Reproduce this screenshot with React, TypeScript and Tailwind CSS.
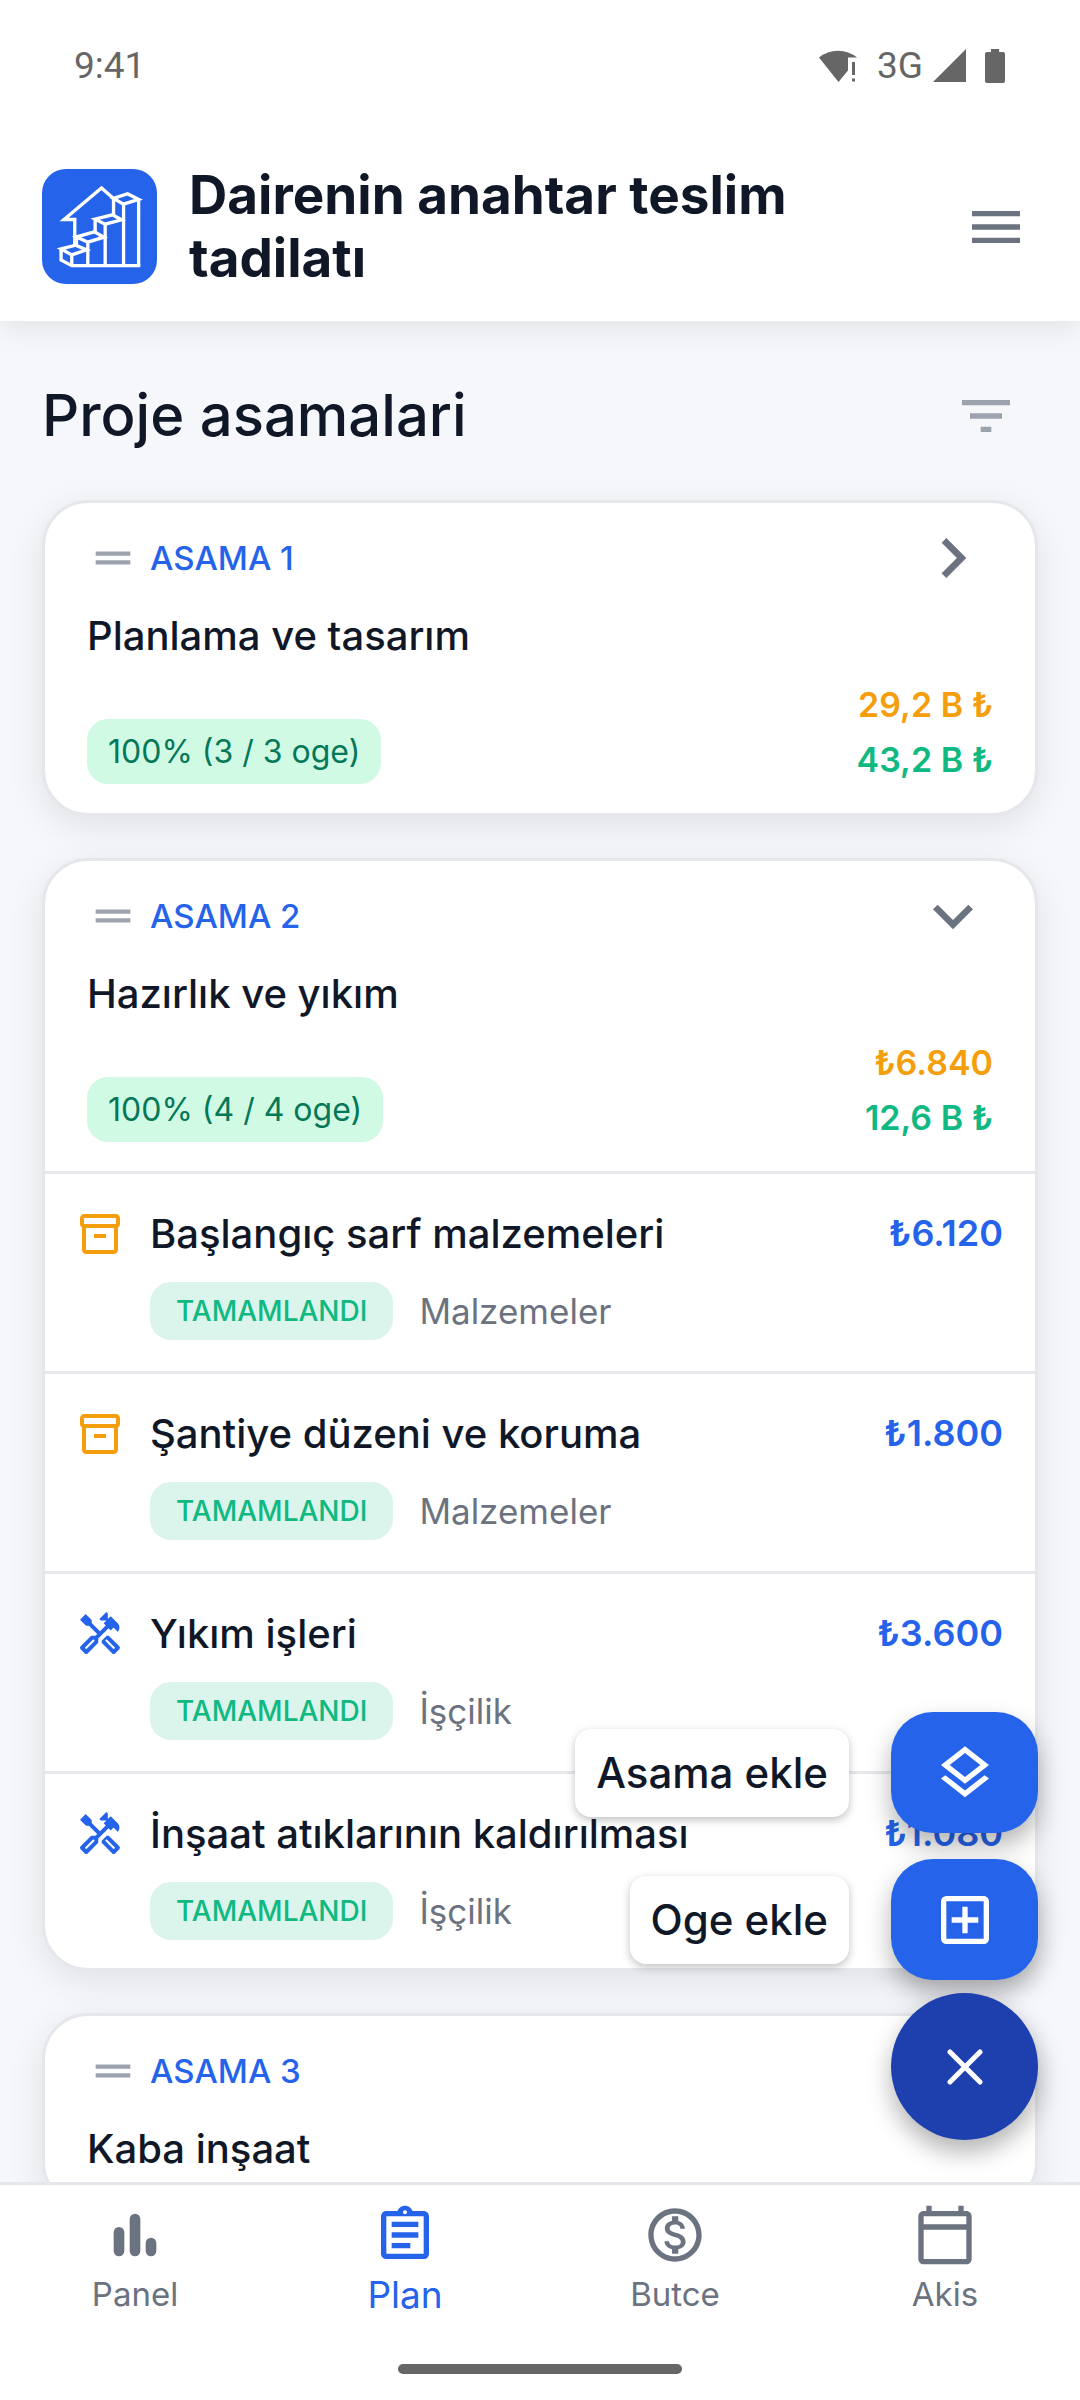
import React from 'react';
import {
  MdMenu,
  MdFilterList,
  MdDragHandle,
  MdChevronRight,
  MdExpandMore,
  MdOutlineInventory2,
  MdOutlineHandyman,
  MdOutlineLayers,
  MdOutlineAddBox,
  MdOutlineAssignment,
  MdOutlineMonetizationOn,
  MdOutlineCalendarToday,
} from 'react-icons/md';

interface Item {
  kind: 'material' | 'labor';
  title: string;
  price: string;
}

interface Stage {
  label: string;
  title: string;
  progress?: string;
  spent?: string;
  budget?: string;
  open?: boolean;
  items?: Item[];
}

const stages: Stage[] = [
  {
    label: 'ASAMA 1',
    title: 'Planlama ve tasarım',
    progress: '100% (3 / 3 oge)',
    spent: '29,2 B ₺',
    budget: '43,2 B ₺',
  },
  {
    label: 'ASAMA 2',
    title: 'Hazırlık ve yıkım',
    progress: '100% (4 / 4 oge)',
    spent: '₺6.840',
    budget: '12,6 B ₺',
    open: true,
    items: [
      { kind: 'material', title: 'Başlangıç sarf malzemeleri', price: '₺6.120' },
      { kind: 'material', title: 'Şantiye düzeni ve koruma', price: '₺1.800' },
      { kind: 'labor', title: 'Yıkım işleri', price: '₺3.600' },
      { kind: 'labor', title: 'İnşaat atıklarının kaldırılması', price: '₺1.080' },
    ],
  },
  { label: 'ASAMA 3', title: 'Kaba inşaat' },
];

const StatusBar = () => (
  <div className="flex h-[132px] items-center justify-between bg-white pl-[74px] pr-[75px] font-[Roboto,sans-serif] text-[37px] text-[#666666]">
    <span>9:41</span>
    <div className="flex items-center">
      <svg className="h-[34px] w-[40px]" viewBox="0 0 40 34" fill="currentColor">
        <path d="M0 8.500 A30 30 0 0 1 38 8.500 L29 8.500 V21.500 L19.500 33 Z" />
        <path d="M33 13h3v13h-3zM33 29.500h3v3h-3z" />
      </svg>
      <span className="ml-[18px]">3G</span>
      <svg className="ml-[10px] h-[34px] w-[34px]" viewBox="0 0 34 34" fill="currentColor">
        <path d="M33 0v33H0z" />
      </svg>
      <svg className="ml-[18px] h-[34px] w-5" viewBox="0 0 20 34" fill="currentColor">
        <path d="M6 0h8v3h4a2 2 0 0 1 2 2v27a2 2 0 0 1-2 2H2a2 2 0 0 1-2-2V5a2 2 0 0 1 2-2h4z" />
      </svg>
    </div>
  </div>
);

const Logo = () => (
  <svg
    className="h-[115px] w-[115px] shrink-0 rounded-[24px] bg-[#2563eb]"
    viewBox="0 0 344 344"
    fill="none"
    stroke="white"
    strokeWidth="10"
  >
    {/* House outline */}
    <path d="M214 88 178 57 66 151H98V228" />
    {/* Steps, tallest first */}
    <path d="M214 88 256 74 289 91 244 105ZM214 88V137M244 105V289M289 91V289" />
    <path d="M159 150 211 137 238 152 189 165ZM159 150V188M189 165V289" />
    <path d="M103 203 157 188 185 204 137 219ZM103 203V228M137 219V289" />
    <path d="M57 239 101 228 133 242 89 257ZM57 239V272L89 289H294M89 257V289" />
  </svg>
);

const Header = () => (
  <header className="relative z-10 bg-white shadow-[0_8px_28px_rgba(0,0,0,0.08)]">
    <StatusBar />
    <div className="flex h-[189px] items-center gap-8 pl-[42px] pr-[52px]">
      <Logo />
      <h1 className="flex-1 text-[53px] font-bold leading-[63px] text-gray-900">Dairenin anahtar teslim tadilatı</h1>
      <button type="button" aria-label="Menü" className="text-[#6b7280]">
        <MdMenu className="h-16 w-16" />
      </button>
    </div>
  </header>
);

const ItemRow = ({ item }: { item: Item }) => {
  const isMaterial = item.kind === 'material';
  return (
    <li className="flex gap-[26px] border-t-[3px] border-[#e5e7eb] pb-[31px] pl-[31px] pr-8 pt-8 last:pb-7">
      <div className="flex h-[55px] w-12 items-center">
        {isMaterial ? (
          <MdOutlineInventory2 className="h-12 w-12 text-[#f59e0b]" />
        ) : (
          <MdOutlineHandyman className="h-12 w-12 text-[#2563eb]" />
        )}
      </div>
      <div className="flex-1">
        <div className="flex items-center justify-between">
          <h3 className="text-[40px] font-medium leading-[55px] text-gray-900">{item.title}</h3>
          <span className="text-[36px] font-semibold leading-[55px] text-[#2563eb]">{item.price}</span>
        </div>
        <div className="mt-[21px] flex items-center gap-[26px]">
          <span className="rounded-[21px] bg-[#dbf4ec] px-[26px] text-[28px] font-medium leading-[58px] text-[#10b981]">
            TAMAMLANDI
          </span>
          <span className="text-[35px] leading-[55px] text-[#6b7280]">{isMaterial ? 'Malzemeler' : 'İşçilik'}</span>
        </div>
      </div>
    </li>
  );
};

const StageCard = ({ stage }: { stage: Stage }) => (
  <section className="overflow-hidden rounded-[46px] border-[3px] border-[#e5e7eb] bg-white shadow-[0_10px_36px_rgba(0,0,0,0.09)]">
    <div className="px-[42px] pb-[26px] pt-[15px]">
      <div className="flex items-center">
        <MdDragHandle className="h-[52px] w-[52px] text-[#9ca3af]" />
        <span className="ml-[11px] flex-1 text-[33px] font-medium leading-[55px] text-[#2563eb]">{stage.label}</span>
        <button type="button" aria-label={stage.title} className="text-[#6b7280]">
          {stage.open ? <MdExpandMore className="h-20 w-20" /> : <MdChevronRight className="h-20 w-20" />}
        </button>
      </div>
      <h2 className="mt-2 text-[40px] font-medium leading-[60px] text-gray-900">{stage.title}</h2>
      {stage.progress && (
        <div className="mt-[11px] flex items-end justify-between">
          <span className="mb-[3px] rounded-[21px] bg-[#d1fae5] px-[21px] text-[32px] leading-[65px] text-[#047857]">
            {stage.progress}
          </span>
          <div className="text-right text-[34px] font-semibold leading-[55px]">
            <div className="text-[#f59e0b]">{stage.spent}</div>
            <div className="text-[#10b981]">{stage.budget}</div>
          </div>
        </div>
      )}
    </div>
    {stage.items && (
      <ul>
        {stage.items.map((item, index) => (
          <ItemRow key={index} item={item} />
        ))}
      </ul>
    )}
  </section>
);

const actions = [
  { label: 'Asama ekle', icon: <MdOutlineLayers className="h-16 w-16" /> },
  { label: 'Oge ekle', icon: <MdOutlineAddBox className="h-16 w-16" /> },
];

// Speed dial, floats over the list
const SpeedDial = () => (
  <div className="absolute bottom-[42px] right-[42px] z-20 flex flex-col items-end">
    <div className="mb-[13px] flex flex-col gap-[26px]">
      {actions.map((action, index) => (
        <button key={index} type="button" className="flex items-center justify-end gap-[42px]">
          <span className="rounded-[16px] bg-white px-[21px] text-[42px] font-medium leading-[88px] text-gray-900 shadow-[0_3px_8px_rgba(0,0,0,0.25)]">
            {action.label}
          </span>
          <span className="flex h-[121px] w-[147px] items-center justify-center rounded-[42px] bg-[#2563eb] text-white shadow-[0_12px_24px_rgba(0,0,0,0.3)]">
            {action.icon}
          </span>
        </button>
      ))}
    </div>
    <button
      type="button"
      aria-label="Kapat"
      className="flex h-[147px] w-[147px] items-center justify-center rounded-full bg-[#1e40af] text-white shadow-[0_12px_24px_rgba(0,0,0,0.3)]"
    >
      <svg className="h-9 w-9" viewBox="0 0 36 36" fill="none" stroke="currentColor" strokeWidth="5" strokeLinecap="round">
        <path d="M3 3 33 33M33 3 3 33" />
      </svg>
    </button>
  </div>
);

const tabs = [
  {
    label: 'Panel',
    icon: (
      <svg className="h-16 w-16" viewBox="0 0 24 24" fill="currentColor">
        <rect x="4" y="9" width="4" height="11" rx="2" />
        <rect x="10" y="4" width="4" height="16" rx="2" />
        <rect x="16" y="13" width="4" height="7" rx="2" />
      </svg>
    ),
  },
  { label: 'Plan', icon: <MdOutlineAssignment className="h-16 w-16" />, active: true },
  { label: 'Butce', icon: <MdOutlineMonetizationOn className="h-16 w-16" /> },
  { label: 'Akis', icon: <MdOutlineCalendarToday className="h-16 w-16" /> },
];

const BottomNav = () => (
  <nav className="border-t-[3px] border-[#e5e7eb] bg-white">
    <div className="grid grid-cols-4 pt-[18px]">
      {tabs.map((tab, index) => (
        <a
          key={index}
          href="#"
          className={
            tab.active
              ? 'flex flex-col items-center text-[37px] text-[#2563eb]'
              : 'flex flex-col items-center text-[33px] text-[#6b7280]'
          }
        >
          {tab.icon}
          <span className="leading-[55px]">{tab.label}</span>
        </a>
      ))}
    </div>
    <div className="mx-auto mb-[26px] mt-[42px] h-[10px] w-[284px] rounded-full bg-[#666666]" />
  </nav>
);

const App = () => {
  return (
    <div className="flex h-screen flex-col bg-[#f5f7fb] font-[Inter,sans-serif]">
      <Header />
      <div className="relative min-h-0 flex-1">
        <main className="h-full overflow-y-auto px-[42px] pb-[42px] [scrollbar-width:none]">
          <div className="flex h-[179px] items-center justify-between pr-5 pt-[10px]">
            <h2 className="text-[58px] font-medium text-gray-900">Proje asamalari</h2>
            <button type="button" aria-label="Filtrele" className="text-[#9ca3af]">
              <MdFilterList className="h-16 w-16" />
            </button>
          </div>
          <div className="flex flex-col gap-[42px]">
            {stages.map((stage, index) => (
              <StageCard key={index} stage={stage} />
            ))}
          </div>
        </main>
        <SpeedDial />
      </div>
      <BottomNav />
    </div>
  );
};

export default App;
